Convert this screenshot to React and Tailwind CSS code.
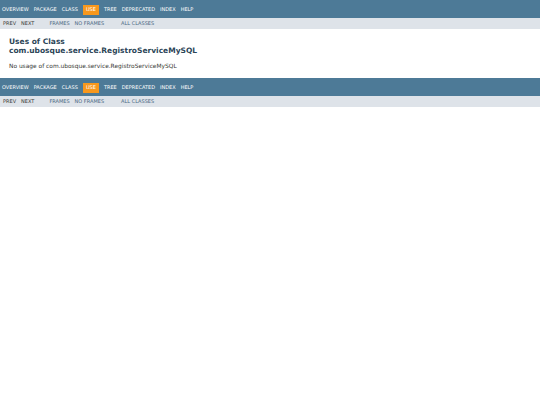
const topItems = ['OVERVIEW', 'PACKAGE', 'CLASS', 'USE', 'TREE', 'DEPRECATED', 'INDEX', 'HELP']

function NavBar() {
  return (
    <div>
      <div className="flex h-[18px] items-center bg-[#4D7A97] pl-[2px] pt-[1px] text-[5px] text-white">
        {topItems.map((item) =>
          item === 'USE' ? (
            <span key={item} className="mr-[5px] flex h-[10px] items-center bg-[#F8981D] px-[3px]">
              {item}
            </span>
          ) : (
            <span key={item} className="mr-[5px]">{item}</span>
          )
        )}
      </div>
      <div className="flex h-[11px] items-center bg-[#dee3e9] pl-[3px] text-[5px]">
        <span className="mr-[5px] text-[#353833]">PREV</span>
        <span className="text-[#353833]">NEXT</span>
        <span className="ml-[15px] text-[#4A6782]">FRAMES</span>
        <span className="ml-[5px] text-[#4A6782]">NO FRAMES</span>
        <span className="ml-[17px] text-[#4A6782]">ALL CLASSES</span>
      </div>
    </div>
  )
}

export default function App() {
  return (
    <div className="min-h-[405px] w-[540px] bg-white font-['DejaVu_Sans',sans-serif] text-[#353833]">
      <NavBar />
      <div className="px-[9px] pt-[8px] pb-[8px]">
        <h1 className="text-[7.5px] font-bold leading-[9px] text-[#2c4557]">
          Uses of Class
          <br />
          com.ubosque.service.RegistroServiceMySQL
        </h1>
        <p className="mt-[7px] text-[5.9px] leading-[8px]">No usage of com.ubosque.service.RegistroServiceMySQL</p>
      </div>
      <NavBar />
    </div>
  )
}
